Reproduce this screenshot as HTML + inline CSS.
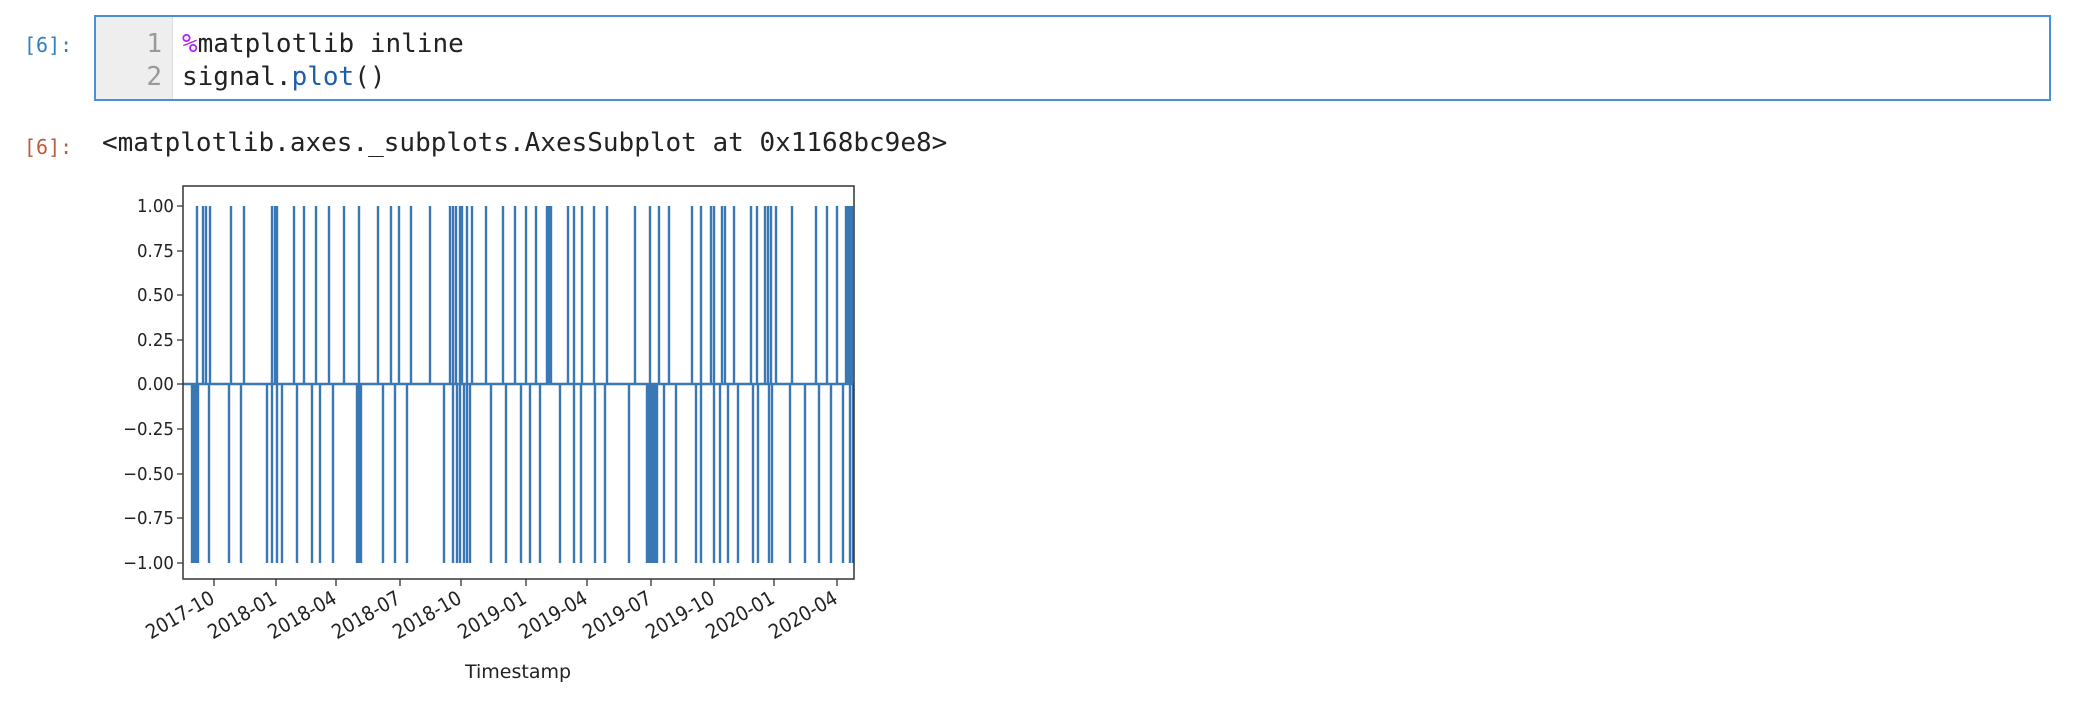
<!DOCTYPE html>
<html><head><style>
body{margin:0;width:2082px;height:702px;background:#fff;position:relative;overflow:hidden;font-family:"DejaVu Sans Mono","Liberation Mono",monospace;}
.p{position:absolute;font-size:20px;}
.box{position:absolute;left:94px;top:15px;width:1957px;height:86px;border:2px solid #4a90d9;box-sizing:border-box;}
.gut{position:absolute;left:0;top:0;width:76px;height:100%;background:#eeeeee;border-right:1px solid #ddd;}
.ln{position:absolute;right:10px;color:#999;font-size:26px;}
.code{position:absolute;left:86px;font-size:26px;color:#222;white-space:pre;}
</style></head><body>
<div class="p" style="left:24px;top:33px;color:#307fc1;">[6]:</div>
<div class="box">
 <div class="gut"><div class="ln" style="top:12px">1</div><div class="ln" style="top:45px">2</div></div>
 <div class="code" style="top:12px"><span style="color:#aa22ff">%</span>matplotlib inline</div>
 <div class="code" style="top:45px">signal.<span style="color:#1f5fa8">plot</span>()</div>
</div>
<div class="p" style="left:24px;top:135px;color:#bf5b3d;">[6]:</div>
<div class="code" style="position:absolute;left:102px;top:128px;font-size:26px;white-space:pre;color:#222">&lt;matplotlib.axes._subplots.AxesSubplot at 0x1168bc9e8&gt;</div>
<svg style="position:absolute;left:0;top:0" width="2082" height="702">
<g stroke="#3a78b5" stroke-width="2.4">
<line x1="183" y1="384" x2="854" y2="384"/>
<path fill="none" d="M197 384V206M203 384V206M206 384V206M210 384V206M231 384V206M244 384V206M272 384V206M275 384V206M277 384V206M294 384V206M304 384V206M316 384V206M329 384V206M344 384V206M359 384V206M378 384V206M391 384V206M399 384V206M411 384V206M430 384V206M450 384V206M453 384V206M456 384V206M460 384V206M462 384V206M467 384V206M472 384V206M486 384V206M503 384V206M515 384V206M526 384V206M536 384V206M547 384V206M549 384V206M551 384V206M568 384V206M574 384V206M582 384V206M594 384V206M607 384V206M635 384V206M650 384V206M659 384V206M669 384V206M692 384V206M701 384V206M711 384V206M714 384V206M722 384V206M725 384V206M734 384V206M751 384V206M757 384V206M765 384V206M768 384V206M771 384V206M776 384V206M792 384V206M816 384V206M827 384V206M837 384V206M846 384V206M848 384V206M850 384V206M852 384V206"/>
<path fill="none" d="M192 384V563M194 384V563M196 384V563M198 384V563M209 384V563M229 384V563M241 384V563M267 384V563M272 384V563M277 384V563M282 384V563M297 384V563M312 384V563M320 384V563M333 384V563M357 384V563M359 384V563M361 384V563M383 384V563M395 384V563M407 384V563M444 384V563M453 384V563M457 384V563M460 384V563M464 384V563M467 384V563M470 384V563M491 384V563M506 384V563M521 384V563M530 384V563M540 384V563M560 384V563M574 384V563M581 384V563M595 384V563M605 384V563M629 384V563M647 384V563M649 384V563M651 384V563M653 384V563M655 384V563M657 384V563M664 384V563M676 384V563M696 384V563M701 384V563M714 384V563M720 384V563M728 384V563M738 384V563M753 384V563M758 384V563M769 384V563M772 384V563M790 384V563M805 384V563M819 384V563M831 384V563M843 384V563M850 384V563M853 384V563"/>
</g>
<rect x="183" y="186" width="671" height="393" fill="none" stroke="#333" stroke-width="1.5"/>
<g stroke="#333" stroke-width="1.3">
<path d="M177 206H183M177 251H183M177 295H183M177 340H183M177 384H183M177 429H183M177 474H183M177 518H183M177 563H183"/>
<path d="M214 579V586M276 579V586M336 579V586M400 579V586M461 579V586M526 579V586M587 579V586M651 579V586M714 579V586M774 579V586M837 579V586"/>
</g>
<g font-family="DejaVu Sans, Liberation Sans, sans-serif" font-size="18" fill="#222" text-anchor="end">
<g transform="scale(0.92,1)">
<text x="189" y="212">1.00</text><text x="189" y="257">0.75</text><text x="189" y="301">0.50</text><text x="189" y="346">0.25</text><text x="189" y="390">0.00</text><text x="189" y="435">−0.25</text><text x="189" y="480">−0.50</text><text x="189" y="524">−0.75</text><text x="189" y="569">−1.00</text>
</g>
<g font-size="20">
<text transform="translate(216,602) rotate(-30) scale(0.9,1)">2017-10</text>
<text transform="translate(278,602) rotate(-30) scale(0.9,1)">2018-01</text>
<text transform="translate(338,602) rotate(-30) scale(0.9,1)">2018-04</text>
<text transform="translate(402,602) rotate(-30) scale(0.9,1)">2018-07</text>
<text transform="translate(463,602) rotate(-30) scale(0.9,1)">2018-10</text>
<text transform="translate(528,602) rotate(-30) scale(0.9,1)">2019-01</text>
<text transform="translate(589,602) rotate(-30) scale(0.9,1)">2019-04</text>
<text transform="translate(653,602) rotate(-30) scale(0.9,1)">2019-07</text>
<text transform="translate(716,602) rotate(-30) scale(0.9,1)">2019-10</text>
<text transform="translate(776,602) rotate(-30) scale(0.9,1)">2020-01</text>
<text transform="translate(839,602) rotate(-30) scale(0.9,1)">2020-04</text>
</g>
<text x="518" y="678" text-anchor="middle" font-size="19">Timestamp</text>
</g>
</svg>
</body></html>
